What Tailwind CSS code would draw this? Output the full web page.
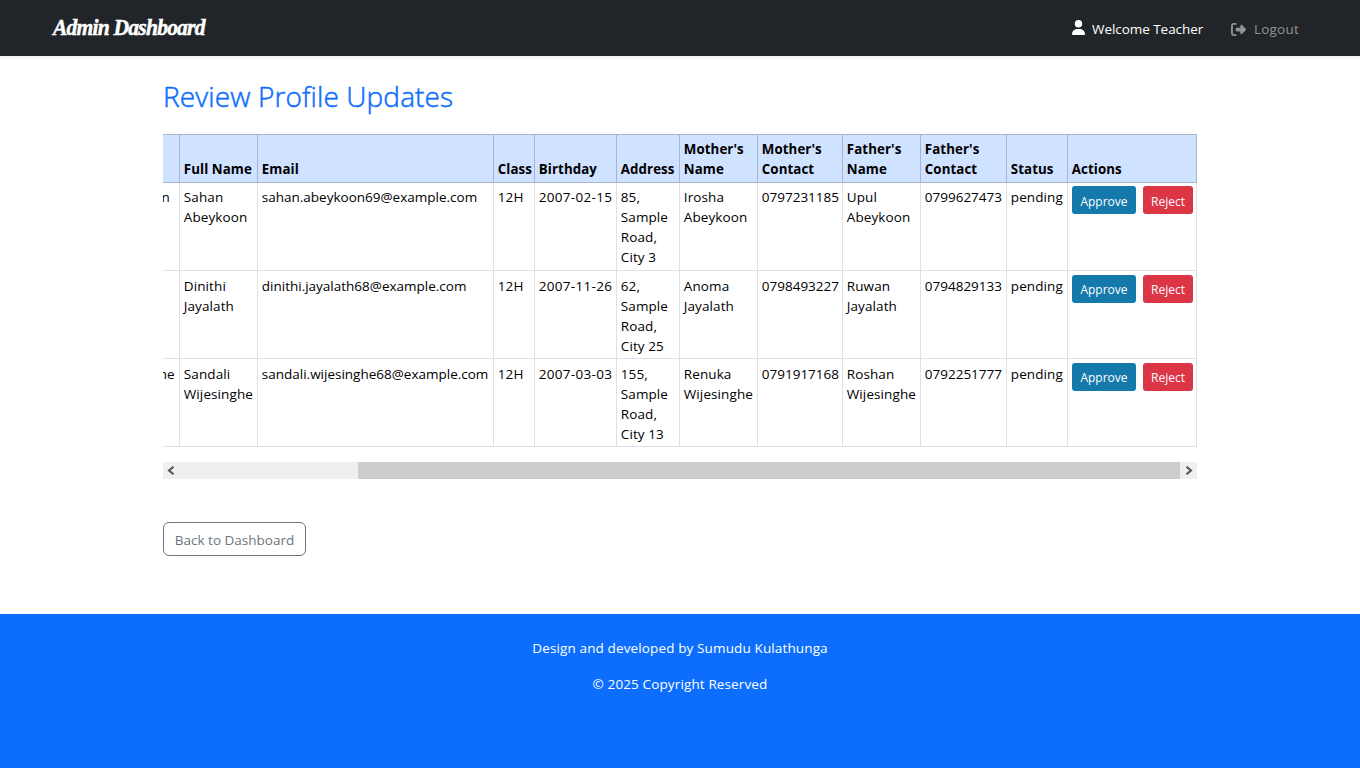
<!DOCTYPE html>
<html lang="en">
<head>
<meta charset="utf-8">
<title>Review Profile Updates</title>
<script src="https://cdn.jsdelivr.net/npm/@tailwindcss/browser@4"></script>
</head>
<body class="flex h-screen flex-col overflow-hidden bg-white font-['Open_Sans','Noto_Sans',sans-serif] text-[13.5px] leading-5 text-black">
<header class="relative flex h-14 shrink-0 items-center justify-between bg-[#212529] pl-[53px] pr-[61px] shadow-[0_2px_4px_rgba(0,0,0,0.075)]">
  <a class="mb-0.5 origin-left scale-x-90 whitespace-nowrap font-['Liberation_Serif',serif] text-[24px] font-bold italic tracking-[-0.9px] text-white [-webkit-text-stroke:0.5px_white]">Admin Dashboard</a>
  <nav class="flex items-center pt-0.5">
    <svg class="mr-[7px] mb-[3px] h-[15px] w-[13px] fill-white" viewBox="0 0 448 512" preserveAspectRatio="none"><path d="M224 256a128 128 0 1 0 0-256 128 128 0 1 0 0 256zm-45.700 48C79.800 304 0 383.800 0 482.300 0 498.700 13.300 512 29.700 512h388.600c16.400 0 29.700-13.300 29.700-29.700C448 383.800 368.200 304 269.700 304z"/></svg>
    <span class="w-[111px] whitespace-nowrap tracking-[-0.05px] text-white">Welcome Teacher</span>
    <svg class="ml-7 mr-2 h-[15px] w-[15px] fill-[#909294]" viewBox="0 0 512 512"><path d="M377.900 105.900 500.700 228.700c7.200 7.200 11.300 17.100 11.300 27.300s-4.100 20.100-11.300 27.300L377.900 406.100c-6.400 6.400-15 9.900-24 9.900-18.700 0-33.900-15.200-33.900-33.900V320H192c-17.700 0-32-14.300-32-32v-64c0-17.700 14.300-32 32-32h128v-62.100c0-18.700 15.200-33.900 33.900-33.900 9 0 17.600 3.600 24 9.900zM160 96H96c-17.700 0-32 14.300-32 32v256c0 17.700 14.300 32 32 32h64c17.700 0 32 14.300 32 32s-14.300 32-32 32H96c-53 0-96-43-96-96V128c0-53 43-96 96-96h64c17.700 0 32 14.300 32 32s-14.300 32-32 32z"/></svg>
    <span class="w-[45px] whitespace-nowrap tracking-[0.2px] text-[#909294]">Logout</span>
  </nav>
</header>
<main class="mx-auto flex h-[558px] w-[1034px] shrink-0 flex-col items-start">
  <h1 class="mt-[21px] h-[38px] whitespace-nowrap text-[28px] font-light leading-[38px] tracking-[0.12px] text-[#0d6efd] [-webkit-text-stroke:0.5px_#0d6efd]">Review Profile Updates</h1>
  <table class="mt-[19px] w-[1034px] table-fixed border-separate border-spacing-0 whitespace-nowrap [&_td]:overflow-hidden [&_td]:border-r [&_td]:border-b [&_td]:border-[#dee2e6] [&_td]:pl-[3.8px] [&_td]:align-top [&_td]:tracking-[0.1px] [&_th]:border-y [&_th]:border-r [&_th]:border-[#a6b5cc] [&_th]:bg-[#cfe2ff] [&_th]:pl-[3.8px] [&_th]:pb-[3px] [&_th]:text-left [&_th]:align-bottom [&_th]:text-[13.3px] [&_th]:tracking-[0.08px]">
    <colgroup><col class="w-[17px]"><col class="w-[78px]"><col class="w-[236px]"><col class="w-[41px]"><col class="w-[82px]"><col class="w-[63px]"><col class="w-[78px]"><col class="w-[85px]"><col class="w-[78px]"><col class="w-[86px]"><col class="w-[61px]"><col class="w-[129px]"></colgroup>
    <thead><tr class="h-[49px]"><th></th><th>Full Name</th><th>Email</th><th>Class</th><th>Birthday</th><th>Address</th><th>Mother's<br>Name</th><th>Mother's<br>Contact</th><th>Father's<br>Name</th><th>Father's<br>Contact</th><th>Status</th><th>Actions</th></tr></thead>
    <tbody>
      <tr class="h-[88px] [&_td]:pt-1 [&_td]:pb-[3px]"><td><div class="-ml-1 flex w-[7px] justify-end">n</div></td><td>Sahan<br>Abeykoon</td><td><span class="tracking-normal">sahan.abeykoon69@example.com</span></td><td>12H</td><td><span class="tracking-[0.3px]">2007-02-15</span></td><td>85,<br>Sample<br>Road,<br>City 3</td><td>Irosha<br>Abeykoon</td><td><span class="tracking-normal">0797231185</span></td><td>Upul<br>Abeykoon</td><td><span class="tracking-normal">0799627473</span></td><td>pending</td>
        <td><div class="-mt-px ml-[0.2px] flex gap-[7px] tracking-normal"><button class="h-7 w-16 rounded-[3px] bg-[#1679ab] pt-[3px] text-[12px] text-white">Approve</button><button class="h-7 w-[50px] rounded-[3px] bg-[#dc3545] pt-[3px] text-[12px] text-white">Reject</button></div></td></tr>
      <tr class="h-[88px] [&_td]:pt-[5px] [&_td]:pb-0.5"><td></td><td>Dinithi<br>Jayalath</td><td><span class="tracking-normal">dinithi.jayalath68@example.com</span></td><td>12H</td><td><span class="tracking-[0.3px]">2007-11-26</span></td><td>62,<br>Sample<br>Road,<br>City 25</td><td>Anoma<br>Jayalath</td><td><span class="tracking-normal">0798493227</span></td><td>Ruwan<br>Jayalath</td><td><span class="tracking-normal">0794829133</span></td><td>pending</td>
        <td><div class="-mt-px ml-[0.2px] flex gap-[7px] tracking-normal"><button class="h-7 w-16 rounded-[3px] bg-[#1679ab] pt-0.5 text-[12px] text-white">Approve</button><button class="h-7 w-[50px] rounded-[3px] bg-[#dc3545] pt-0.5 text-[12px] text-white">Reject</button></div></td></tr>
      <tr class="h-[88px] [&_td]:pt-[5px] [&_td]:pb-0.5"><td><div class="-ml-1 flex w-[12px] justify-end">he</div></td><td>Sandali<br>Wijesinghe</td><td><span class="tracking-normal">sandali.wijesinghe68@example.com</span></td><td>12H</td><td><span class="tracking-[0.3px]">2007-03-03</span></td><td>155,<br>Sample<br>Road,<br>City 13</td><td>Renuka<br>Wijesinghe</td><td><span class="tracking-normal">0791917168</span></td><td>Roshan<br>Wijesinghe</td><td><span class="tracking-normal">0792251777</span></td><td>pending</td>
        <td><div class="-mt-px ml-[0.2px] flex gap-[7px] tracking-normal"><button class="h-7 w-16 rounded-[3px] bg-[#1679ab] pt-0.5 text-[12px] text-white">Approve</button><button class="h-7 w-[50px] rounded-[3px] bg-[#dc3545] pt-0.5 text-[12px] text-white">Reject</button></div></td></tr>
    </tbody>
  </table>
  <div class="mt-[15px] flex h-[17px] w-full shrink-0 bg-[#efefef]">
    <svg class="h-[17px] w-[17px] fill-none stroke-[#505050] stroke-2" viewBox="0 0 17 17"><path d="M10.500 4.800 6 8.500l4.500 3.700"/></svg>
    <div class="ml-[178px] flex-1 bg-[#cdcdcd]"></div>
    <svg class="h-[17px] w-[17px] fill-none stroke-[#505050] stroke-2" viewBox="0 0 17 17"><path d="M6.500 4.800l4.500 3.700-4.500 3.700"/></svg>
  </div>
  <a class="mt-[43px] flex h-[34px] w-[143px] shrink-0 items-center justify-center whitespace-nowrap rounded-md border border-[#6c757d] pt-0.5 text-[#6c757d]">Back to Dashboard</a>
</main>
<footer class="flex flex-1 flex-col items-center gap-4 bg-[#0d6efd] pt-6 tracking-[0.13px] text-white">
  <p class="whitespace-nowrap">Design and developed by Sumudu Kulathunga</p>
  <p class="whitespace-nowrap">© 2025 Copyright Reserved</p>
</footer>
</body>
</html>
